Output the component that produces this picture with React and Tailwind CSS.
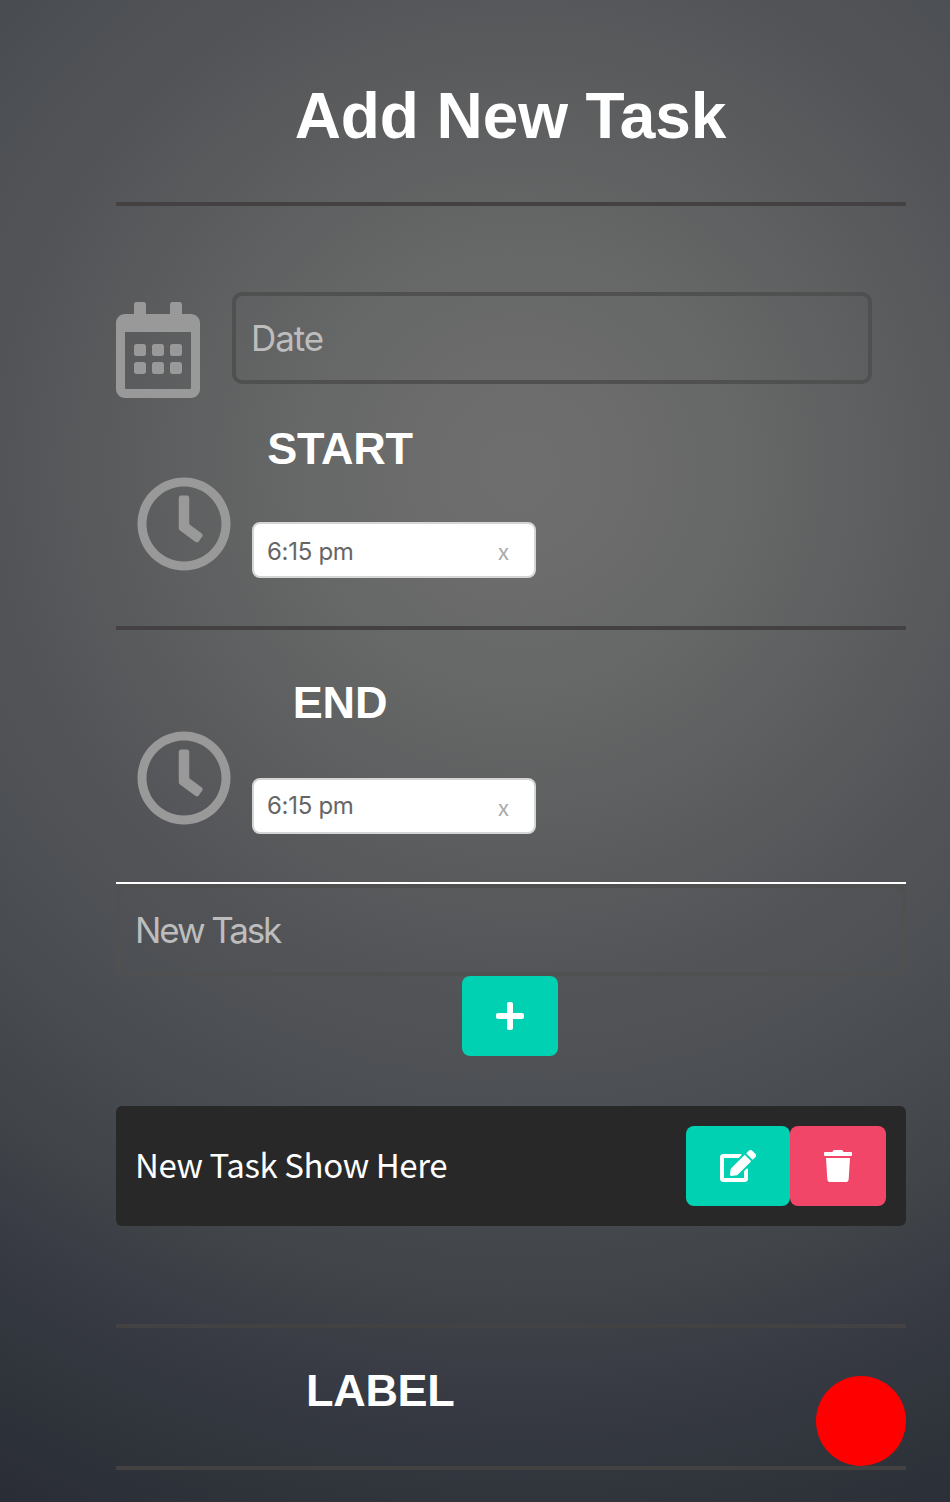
import React from "react";
import { FaRegCalendarAlt, FaRegClock, FaPlus, FaEdit, FaTrash } from "react-icons/fa";

function TimeRow({ label, value, className, fieldClass, valueClass }) {
  return (
    <section className={`flex ${className}`}>
      <div className="ml-5 pt-[60px]">
        <FaRegClock className="h-24 w-24 text-[#999]" />
      </div>
      <div className="ml-5">
        <h2 className="w-[176px] pt-[7px] text-center font-['Liberation_Sans',sans-serif] text-[45px] leading-[52px] font-bold tracking-[-0.2px] text-white">
          {label}
        </h2>
        <div className={`flex h-14 w-[284px] items-center justify-between rounded-lg border-2 border-[#d5d5d5] bg-white pr-[25px] pl-[13px] ${fieldClass}`}>
          <span className={`text-[24px] leading-7 tracking-[-0.3px] text-[#666] ${valueClass}`}>{value}</span>
          <span className="font-['Noto_Sans_CJK_JP',sans-serif] text-[22px] leading-7 text-[#aaa]">x</span>
        </div>
      </div>
    </section>
  );
}

export default function App() {
  return (
    <main className="h-[1502px] w-[950px] overflow-hidden bg-[radial-gradient(circle_at_520px_470px,#6e6e6e_0px,#6c6c6c_100px,#666767_220px,#5c5d5e_380px,#535458_520px,#494d51_690px,#404347_830px,#383b44_920px,#30343b_1030px,#282b34_1180px)] pr-[44px] pl-[116px] font-['Inter',sans-serif]">
      <header className="flex h-[206px] justify-center border-b-4 border-[#434142] pt-[79px]">
        <h1 className="mr-[1px] font-['Liberation_Sans',sans-serif] text-[64px] leading-[74px] font-bold tracking-[-0.1px] text-white">Add New Task</h1>
      </header>

      <div className="flex h-[210px] items-start pt-[86px]">
        <FaRegCalendarAlt className="mt-[10px] h-24 w-[84px] text-[#999]" />
        <input
          placeholder="Date"
          className="ml-8 h-[92px] w-[640px] rounded-[10px] border-4 border-[#505050] bg-transparent px-[15px] pb-[1px] text-[35px] tracking-[-1.1px] placeholder:text-[#bdbdbd]"
        />
      </div>

      <TimeRow label="START" value="6:15 pm" className="h-[214px] border-b-4 border-[#434142]" fieldClass="mt-[47px]" valueClass="pt-1" />
      <TimeRow label="END" value="6:15 pm" className="h-[254px] border-b-2 border-white pt-10" fieldClass="mt-[49px]" valueClass="" />

      <input
        placeholder="New Task"
        className="block h-[92px] w-full rounded-[10px] border-4 border-[#505050] bg-transparent px-[15px] pb-[1px] text-[35px] tracking-[-2.1px] placeholder:text-[#bdbdbd]"
      />
      <button className="ml-[346px] flex h-20 w-24 items-center justify-center rounded-lg bg-[#00d1b2] text-white">
        <FaPlus className="h-8 w-7" />
      </button>

      <div className="mt-[50px] flex h-[120px] items-center rounded-md bg-[#282828] pr-5 pl-[19px]">
        <span className="flex-1 pb-[4px] font-['Noto_Sans_CJK_JP',sans-serif] text-[33px] leading-[50px] tracking-[-0.4px] text-white">New Task Show Here</span>
        <button className="flex h-20 w-[104px] items-center justify-center rounded-lg bg-[#00d1b2] text-white">
          <FaEdit className="h-8 w-9" />
        </button>
        <button className="flex h-20 w-24 items-center justify-center rounded-lg bg-[#f14668] text-white">
          <FaTrash className="h-8 w-7" />
        </button>
      </div>

      <footer className="mt-[98px] flex h-[146px] items-end justify-between border-y-4 border-[#434142]">
        <h2 className="mb-[49px] ml-[190px] font-['Liberation_Sans',sans-serif] text-[45px] leading-[52px] font-bold tracking-[-0.3px] text-white">LABEL</h2>
        <div className="h-[90px] w-[90px] rounded-full bg-[#f00]" />
      </footer>
    </main>
  );
}
